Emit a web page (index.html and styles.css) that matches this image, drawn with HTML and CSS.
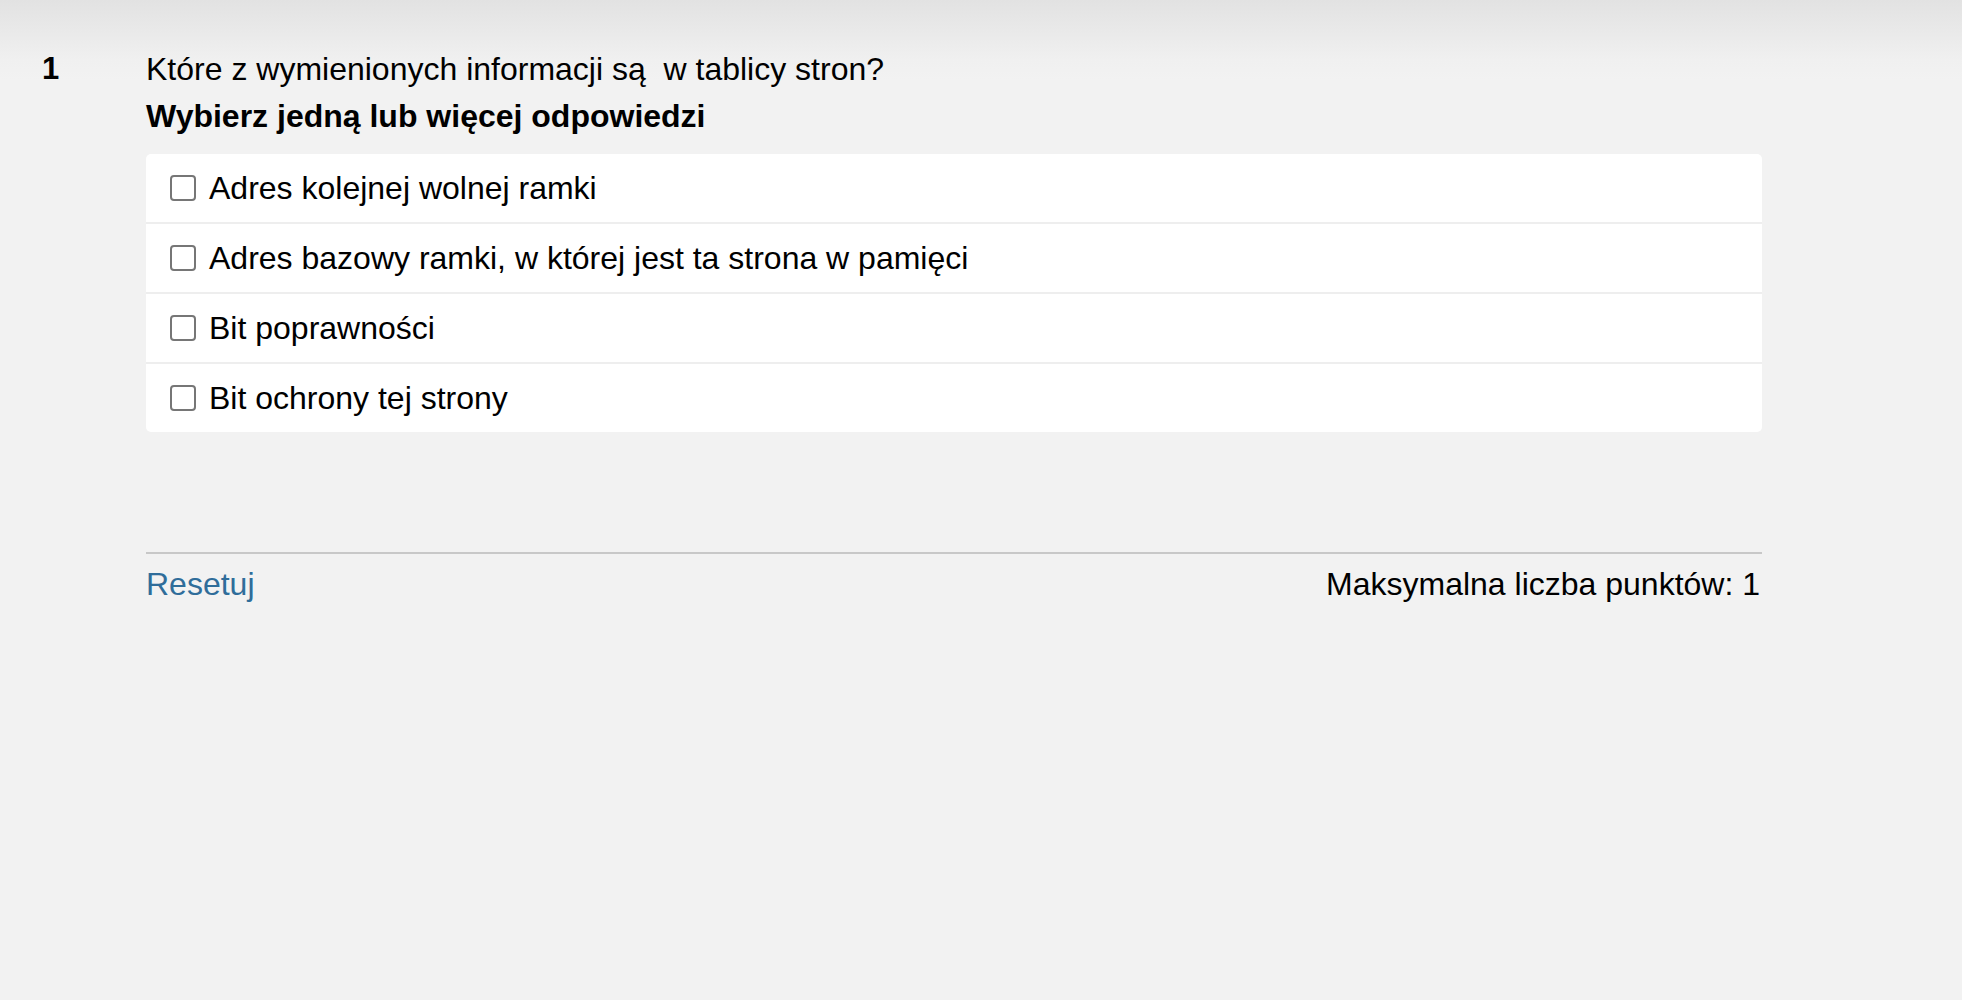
FILE: index.html
```html
<!DOCTYPE html>
<html lang="pl">
<head>
<meta charset="utf-8">
<title>Pytanie 1</title>
<link rel="stylesheet" href="styles.css">
</head>
<body>
<div class="page">
  <div class="question">
    <div class="qno">1</div>
    <div class="content">
      <div class="qtext">Które z wymienionych informacji są &nbsp;w tablicy stron?</div>
      <div class="prompt">Wybierz jedną lub więcej odpowiedzi</div>
      <div class="answers">
        <label class="answer"><span class="box"></span><span class="label">Adres kolejnej wolnej ramki</span></label>
        <label class="answer"><span class="box"></span><span class="label">Adres bazowy ramki, w której jest ta strona w pamięci</span></label>
        <label class="answer"><span class="box"></span><span class="label">Bit poprawności</span></label>
        <label class="answer"><span class="box"></span><span class="label">Bit ochrony tej strony</span></label>
      </div>
      <div class="footer">
        <a class="reset" href="#">Resetuj</a>
        <span class="max">Maksymalna liczba punktów: 1</span>
      </div>
    </div>
  </div>
</div>
</body>
</html>
```
FILE: styles.css
```css
html, body {
  margin: 0;
  padding: 0;
}
body {
  background-color: #f2f2f2;
  background-image: linear-gradient(#e2e2e2 0px, #f0f0f0 60px, #f2f2f2 80px);
  background-repeat: no-repeat;
  background-size: 100% 80px;
  font-family: "Liberation Sans", Arial, sans-serif;
  color: #000;
  min-height: 1000px;
}
.page {
  padding: 47px 0 0 0;
}
.question {
  display: grid;
  grid-template-columns: 146px 1616px;
}
.qno {
  padding-left: 42px;
  font-weight: bold;
  font-size: 31px;
  line-height: 44px;
}
.qtext {
  font-size: 32px;
  line-height: 44px;
}
.prompt {
  margin-top: 3px;
  font-size: 32px;
  line-height: 44px;
  font-weight: bold;
}
.answers {
  margin-top: 16px;
  background: #fff;
  border-radius: 5px;
  display: flex;
  flex-direction: column;
}
.answer {
  display: flex;
  align-items: center;
  height: 68px;
  padding-left: 24px;
  font-size: 32px;
  border-top: 2px solid #eeeeee;
}
.answer:first-child {
  border-top: none;
}
.box {
  width: 22px;
  height: 22px;
  border: 2px solid #767676;
  border-radius: 4px;
  margin-right: 13px;
  box-sizing: content-box;
}
.footer {
  margin-top: 120px;
  border-top: 2px solid #c8c8c8;
  display: flex;
  justify-content: space-between;
  align-items: center;
  padding-top: 8px;
  font-size: 32px;
  line-height: 44px;
}
.reset {
  color: #2f6d9a;
  text-decoration: none;
}
.max {
  padding-right: 2px;
}
```
